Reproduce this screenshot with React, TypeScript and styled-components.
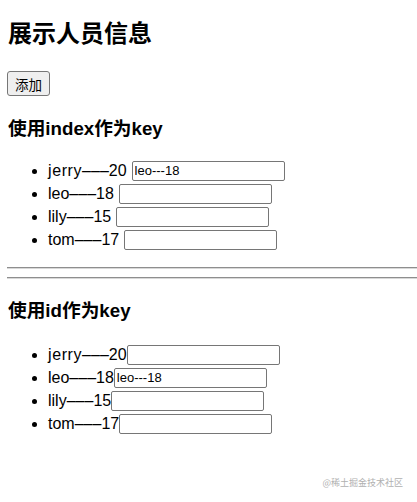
import React from "react";
import styled, { createGlobalStyle } from "styled-components";

const Global = createGlobalStyle`
  html, body { margin: 0; padding: 0; background: #fff; }
  body {
    font-family: "Liberation Sans", "Noto Sans CJK SC", sans-serif;
    color: #000;
    overflow: hidden;
  }
`;

const Page = styled.div`
  position: relative;
  width: 417px;
  height: 502px;
  padding: 0 8px;
  box-sizing: border-box;
  overflow: hidden;
`;

const Title = styled.h2`
  margin: 0;
  padding-top: 18px;
  font-size: 24px;
  line-height: 32px;
  font-weight: bold;
  font-family: "Liberation Sans", "Noto Sans CJK SC", sans-serif;
`;

const AddButton = styled.button`
  margin-top: 21px;
  height: 25px;
  padding: 0 7px;
  font-size: 13.5px;
  font-family: "Noto Sans CJK SC", sans-serif;
  background: #efefef;
  border: 1px solid #767676;
  border-radius: 3px;
  color: #000;
  margin-left: -1px;
  display: block;
`;

const SubTitle = styled.h3<{ $top: number }>`
  margin: ${(p) => p.$top}px 0 0 0;
  font-size: 18.7px;
  line-height: 26px;
  font-weight: bold;
  font-family: "Liberation Sans", "Noto Sans CJK SC", sans-serif;
`;

const List = styled.ul<{ $top: number }>`
  margin: ${(p) => p.$top}px 0 0 0;
  padding-left: 40px;
  list-style: disc;
`;

const Item = styled.li`
  height: 23px;
  line-height: 23px;
  font-size: 16px;
`;

const ItemInner = styled.span`
  display: inline-flex;
  align-items: center;
  height: 23px;
  vertical-align: top;
`;

const Name = styled.span<{ $wide: boolean }>`
  letter-spacing: ${(p) => (p.$wide ? "0.6px" : "0")};
`;

const Field = styled.input<{ $gap: number }>`
  margin-left: ${(p) => p.$gap}px;
  width: 153px;
  height: 20px;
  box-sizing: border-box;
  padding: 1px 2px;
  border: 1px solid #767676;
  border-radius: 2px;
  font-size: 13px;
  font-family: "Liberation Sans", sans-serif;
  color: #000;
  background: #fff;
  outline: none;
`;

const Rule = styled.hr<{ $top: number }>`
  margin: ${(p) => p.$top}px -8px 0 -1px;
  height: 0;
  border: none;
  border-top: 1px solid #8e8e8e;
  border-bottom: 1px solid #d8d8d8;
`;

const Watermark = styled.div`
  position: absolute;
  right: 14px;
  bottom: 13px;
  font-size: 9px;
  color: #b0b0b0;
  font-family: "Noto Sans CJK SC", sans-serif;
`;

type Person = { name: string; age: number; value: string };

const people1: Person[] = [
  { name: "jerry", age: 20, value: "leo---18" },
  { name: "leo", age: 18, value: "" },
  { name: "lily", age: 15, value: "" },
  { name: "tom", age: 17, value: "" },
];

const people2: Person[] = [
  { name: "jerry", age: 20, value: "" },
  { name: "leo", age: 18, value: "leo---18" },
  { name: "lily", age: 15, value: "" },
  { name: "tom", age: 17, value: "" },
];

function PeopleList({ data, gap, top }: { data: Person[]; gap: number; top: number }) {
  return (
    <List $top={top}>
      {data.map((p) => (
        <Item key={p.name}>
          <ItemInner>
            <Name $wide={p.name === "jerry"}>{p.name}</Name>–––{p.age}
            <Field $gap={gap} type="text" defaultValue={p.value} />
          </ItemInner>
        </Item>
      ))}
    </List>
  );
}

export default function App() {
  return (
    <Page>
      <Global />
      <Title>展示人员信息</Title>
      <AddButton>添加</AddButton>
      <SubTitle $top={20}>使用index作为key</SubTitle>
      <PeopleList data={people1} gap={5} top={17} />
      <Rule $top={16} />
      <Rule $top={8} />
      <SubTitle $top={19}>使用id作为key</SubTitle>
      <PeopleList data={people2} gap={0} top={19} />
      <Watermark>@稀土掘金技术社区</Watermark>
    </Page>
  );
}
